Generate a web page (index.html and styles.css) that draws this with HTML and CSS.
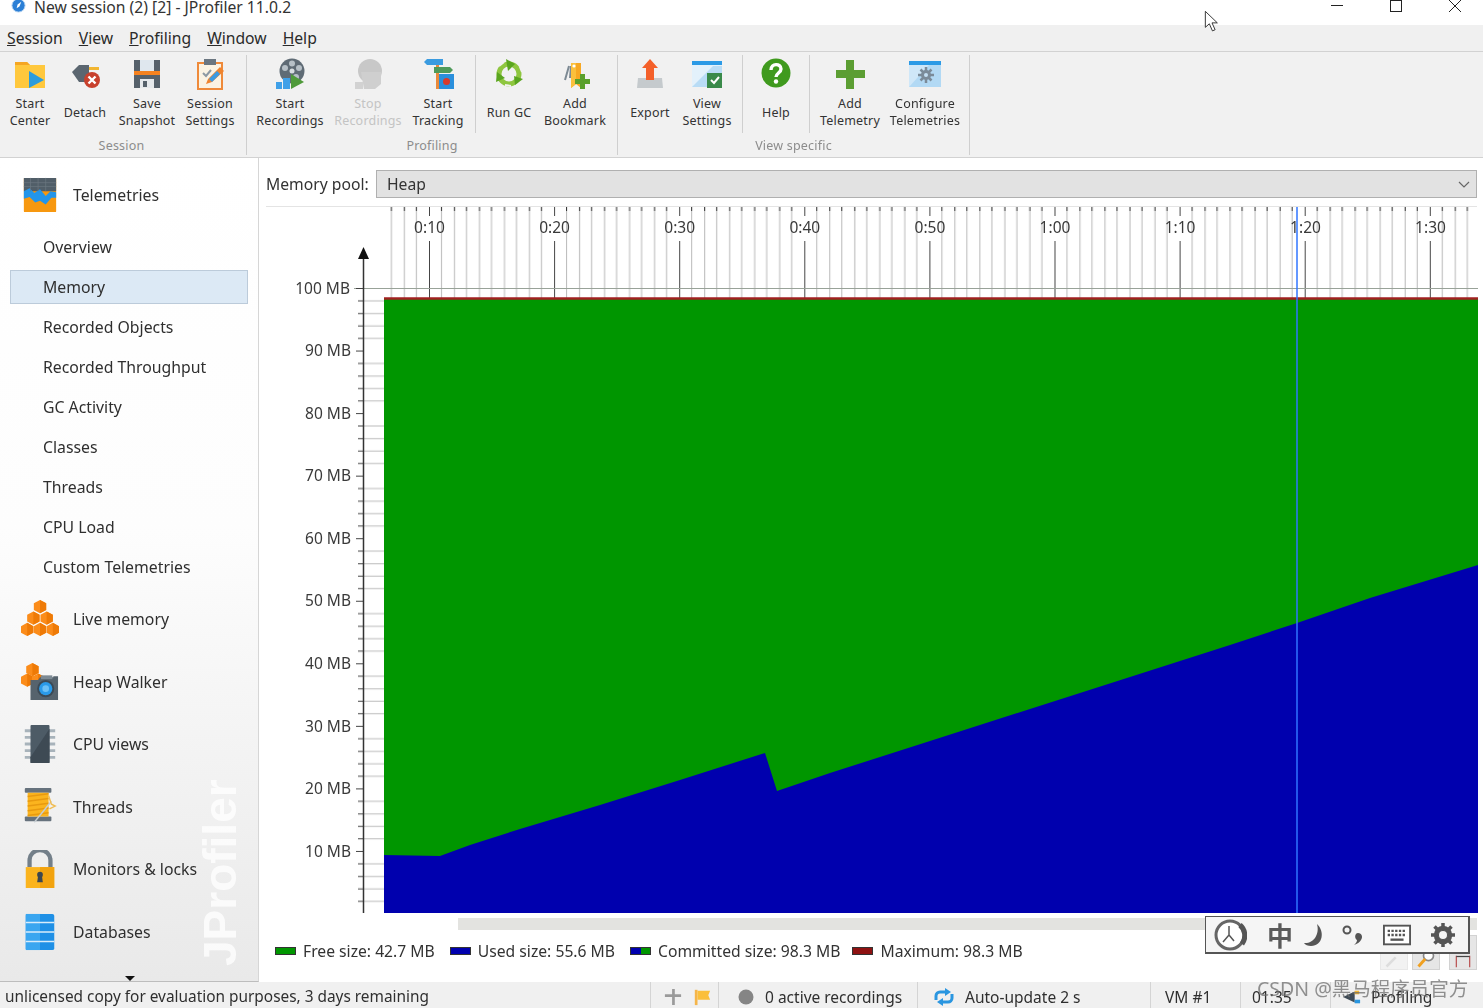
FILE: index.html
```html
<!DOCTYPE html>
<html lang="en">
<head>
<meta charset="utf-8">
<title>JProfiler</title>
<link rel="stylesheet" href="styles.css">
</head>
<body>
<div class="app">
  <header class="titlebar">
    <svg class="title-icon" viewBox="0 0 16 16"><circle cx="8" cy="8" r="7" fill="#2b7fd6" stroke="#bcd8f2"/><path d="M11 4 9 9 6 11l1-4z" fill="#fff"/></svg>
    <span class="title-text">New session (2) [2] - JProfiler 11.0.2</span>
    <div class="win-buttons">
      <svg class="win-btn" viewBox="0 0 60 14"><path d="M27 5.500h12" stroke="#222" fill="none"/></svg>
      <svg class="win-btn" viewBox="0 0 60 14"><rect x="26.500" y="0.500" width="11" height="11" stroke="#222" fill="none"/></svg>
      <svg class="win-btn" viewBox="0 0 60 14"><path d="M25 0l12 12M37 0 25 12" stroke="#222" fill="none"/></svg>
    </div>
  </header>

  <nav class="menubar">
    <span><u>S</u>ession</span><span><u>V</u>iew</span><span><u>P</u>rofiling</span><span><u>W</u>indow</span><span><u>H</u>elp</span>
  </nav>

  <section class="toolbar">
    <div class="tool-group group-session">
      <div class="tool-row">
        <div class="tool">
          <svg class="tool-icon" viewBox="0 0 32 32"><path d="M1 4h12l3 3h15v23H1z" fill="#ffc83d"/><path d="M1 4h12l3 3H1z" fill="#f5a623"/><path d="M15 13l15 9-15 8z" fill="#2d9cdb"/></svg>
          <div class="tool-label">Start<br>Center</div>
        </div>
        <div class="tool">
          <svg class="tool-icon" viewBox="0 0 32 32"><path d="M3 14 10 7h10v17H10z" fill="#5b6670"/><path d="M20 9h10v3H20z" fill="#f2b632"/><path d="M20 18h4v3h-4z" fill="#5b6670"/><circle cx="23" cy="22" r="8" fill="#c8412d"/><path d="M19.500 18.500l7 7m0-7-7 7" stroke="#fff" stroke-width="2.400"/></svg>
          <div class="tool-label">Detach</div>
        </div>
        <div class="tool">
          <svg class="tool-icon" viewBox="0 0 32 32"><path d="M3 2h26v28H3z" fill="#56616b"/><path d="M9 2h14v11H9z" fill="#dfe7ee"/><path d="M3 13h26v4H3z" fill="#f58220"/><path d="M9 21h14v9H9z" fill="#e6e9ec"/><path d="M12 23h4v6h-4z" fill="#56616b"/></svg>
          <div class="tool-label">Save<br>Snapshot</div>
        </div>
        <div class="tool">
          <svg class="tool-icon" viewBox="0 0 32 32"><rect x="4" y="5" width="24" height="26" fill="#fbf3e3" stroke="#ef8a3a" stroke-width="2"/><path d="M10 1h12v6H10z" fill="#6b7680"/><path d="M9 15l3 3 5-6" stroke="#8d99a3" stroke-width="2" fill="none"/><path d="M12 26l2-5L26 9l4 4-12 11z" fill="#f0842e"/><path d="M15 21l3 3 8-8-3-3z" fill="#3b9ae1"/></svg>
          <div class="tool-label">Session<br>Settings</div>
        </div>
      </div>
      <div class="group-label">Session</div>
    </div>

    <div class="tool-group group-profiling">
      <div class="tool-row">
        <div class="tool">
          <svg class="tool-icon" viewBox="0 0 32 32"><circle cx="18" cy="13" r="12.500" fill="#5f6b75"/><circle cx="18" cy="13" r="2.500" fill="#d8dde1"/><circle cx="18" cy="5.500" r="3" fill="#b7c0c7"/><circle cx="11" cy="10" r="3" fill="#b7c0c7"/><circle cx="25" cy="10" r="3" fill="#b7c0c7"/><circle cx="22" cy="19" r="3" fill="#b7c0c7"/><path d="M17 16l13 8-13 7z" fill="#4f9a3a"/><path d="M2 24h6v7H2zM9 20h7v11H9z" fill="#3fa0e8"/></svg>
          <div class="tool-label">Start<br>Recordings</div>
        </div>
        <div class="tool disabled">
          <svg class="tool-icon" viewBox="0 0 32 32"><circle cx="18" cy="13" r="12" fill="#c8c8c8"/><path d="M9 14h20v12l-6 5H12z" fill="#cfcfcf"/><path d="M3 24h8v7H3z" fill="#d2d2d2"/></svg>
          <div class="tool-label">Stop<br>Recordings</div>
        </div>
        <div class="tool">
          <svg class="tool-icon" viewBox="0 0 32 32"><path d="M14 1h3v15h-3z" fill="#e98a3c"/><path d="M2 4l3-3h16v6H5z" fill="#3a9be0"/><path d="M12 9h16l3 3-3 3H12z" fill="#4f9a5a"/><path d="M14 16h3v15h-3z" fill="#e98a3c"/><rect x="17" y="16" width="15" height="15" fill="#2a8fdc"/><circle cx="24.500" cy="23.500" r="3.500" fill="#d93a2b"/></svg>
          <div class="tool-label">Start<br>Tracking</div>
        </div>
        <div class="tool-sep"></div>
        <div class="tool">
          <svg class="tool-icon" viewBox="0 0 32 32"><circle cx="16" cy="16" r="10" fill="none" stroke="#8ec63f" stroke-width="5"/><path d="M13 1l9 5-7 7z" fill="#5aa51f"/><path d="M30 21l-8 6-1-9z" fill="#5aa51f"/><path d="M3 24l1-10 8 6z" fill="#5aa51f"/><path d="M6 8 11 4M27 9l2 5M12 27l6 1" stroke="#f1f1f1" stroke-width="2"/></svg>
          <div class="tool-label">Run GC</div>
        </div>
        <div class="tool">
          <svg class="tool-icon" viewBox="0 0 32 32"><path d="M10 8 6 22M12 8l-1 12" stroke="#7d8a94" stroke-width="2" fill="none"/><path d="M12 5h10v25l-5-4-5 4z" fill="#f7a823"/><path d="M12 5h5v21l-5 4z" fill="#fbc03c"/><circle cx="15" cy="8" r="1.600" fill="#fff"/><path d="M21 16h5v5h5v5h-5v5h-5v-5h-5v-5h5z" fill="#5aa02c"/></svg>
          <div class="tool-label">Add<br>Bookmark</div>
        </div>
      </div>
      <div class="group-label">Profiling</div>
    </div>

    <div class="tool-group group-view">
      <div class="tool-row">
        <div class="tool">
          <svg class="tool-icon" viewBox="0 0 32 32"><path d="M4 20h24l1 10H3z" fill="#c5cacd"/><path d="M16 1l8 9h-4v12h-8V10H8z" fill="#f4602a"/></svg>
          <div class="tool-label">Export</div>
        </div>
        <div class="tool">
          <svg class="tool-icon" viewBox="0 0 32 32"><rect x="1" y="3" width="30" height="26" fill="#e3f1fb"/><path d="M1 29 22 8h9v21z" fill="#b9dcf5"/><rect x="1" y="3" width="30" height="4" fill="#2b9ae6"/><rect x="16" y="15" width="15" height="15" fill="#3a8a4a"/><path d="M20 22l3 3 5-6" stroke="#fff" stroke-width="2" fill="none"/></svg>
          <div class="tool-label">View<br>Settings</div>
        </div>
        <div class="tool-sep"></div>
        <div class="tool">
          <svg class="tool-icon" viewBox="0 0 32 32"><circle cx="16" cy="15" r="14.500" fill="#3f9a1e"/><path d="M11 12c0-7 10-7 10-1 0 4-5 4-5 8" stroke="#fff" stroke-width="3.400" fill="none"/><circle cx="16" cy="23.500" r="2.200" fill="#fff"/></svg>
          <div class="tool-label">Help</div>
        </div>
        <div class="tool-sep"></div>
        <div class="tool">
          <svg class="tool-icon" viewBox="0 0 32 32"><path d="M12 2h8v10h11v8H20v11h-8V20H2v-8h10z" fill="#5c9e33"/></svg>
          <div class="tool-label">Add<br>Telemetry</div>
        </div>
        <div class="tool">
          <svg class="tool-icon" viewBox="0 0 32 32"><rect x="0" y="3" width="32" height="26" fill="#cfe7f8"/><path d="M0 29 20 7h12v22z" fill="#b2d9f4"/><rect x="0" y="3" width="32" height="4" fill="#2b9ae6"/><path d="M17 9v16M9 17h16M11.500 11.500l11 11M22.500 11.500l-11 11" stroke="#7b8b99" stroke-width="2.500"/><circle cx="17" cy="17" r="5" fill="#7b8b99"/><circle cx="17" cy="17" r="2" fill="#c3def2"/></svg>
          <div class="tool-label">Configure<br>Telemetries</div>
        </div>
      </div>
      <div class="group-label">View specific</div>
    </div>
  </section>

  <main class="workspace">
    <aside class="sidebar">
      <div class="side-head first">
        <svg class="side-icon" viewBox="0 0 40 40"><rect x="3" y="2" width="34" height="36" rx="1" fill="#f7980f"/><path d="M3 2h34v14H3z" fill="#515e68"/><path d="M3 16l6-3 5 5 6-4 6 7 5-5 6 1v6l-5 0-6 7-6-4-5 2-6-6-6 2z" fill="#2395ea"/><path d="M3 7h34M3 11h34M10 2v14M18 2v14M26 2v14" stroke="#6c7882" stroke-width=".7"/></svg>
        <span>Telemetries</span>
      </div>
      <ul class="side-list">
        <li>Overview</li>
        <li class="selected">Memory</li>
        <li>Recorded Objects</li>
        <li>Recorded Throughput</li>
        <li>GC Activity</li>
        <li>Classes</li>
        <li>Threads</li>
        <li>CPU Load</li>
        <li>Custom Telemetries</li>
      </ul>
      <div class="side-head">
        <svg class="side-icon" viewBox="0 0 40 40"><defs><g id="cube"><path d="M0-7 6.500-3.500v7L0 7-6.500 3.500v-7z" fill="#fb8c1a"/><path d="M0-7 6.500-3.500v7L0 7z" fill="#ee7a06"/></g></defs><use href="#cube" x="20" y="7"/><use href="#cube" x="13" y="19"/><use href="#cube" x="27" y="19"/><use href="#cube" x="6.500" y="31"/><use href="#cube" x="20" y="31"/><use href="#cube" x="33.500" y="31"/></svg>
        <span>Live memory</span>
      </div>
      <div class="side-head">
        <svg class="side-icon" viewBox="0 0 40 40"><use href="#cube" x="12" y="7"/><use href="#cube" x="6.500" y="18"/><use href="#cube" x="18" y="18"/><path d="M10 18h8l2-3h14v-1h5v25H10z" fill="#56636d"/><path d="M21 13h12v4H21z" fill="#7d8a94"/><circle cx="26" cy="27" r="9" fill="#3c4a55"/><circle cx="26" cy="27" r="7" fill="#2a9ae8"/><circle cx="26" cy="27" r="3.500" fill="#6cc0f5"/></svg>
        <span>Heap Walker</span>
      </div>
      <div class="side-head">
        <svg class="side-icon" viewBox="0 0 40 40"><path d="M4 6h32M4 13h32M4 20h32M4 27h32M4 34h32" stroke="#a8b3bb" stroke-width="3"/><rect x="10" y="0" width="20" height="40" rx="1" fill="#4d5b66"/><path d="M10 40V34L30 4v36z" fill="#3e4a54"/></svg>
        <span>CPU views</span>
      </div>
      <div class="side-head">
        <svg class="side-icon" viewBox="0 0 40 40"><rect x="4" y="0" width="28" height="5" rx="1" fill="#66727d"/><rect x="4" y="30" width="28" height="5" rx="1" fill="#66727d"/><rect x="7" y="5" width="22" height="25" fill="#fbb41e"/><path d="M7 9l22-3M7 14l22-3M7 19l22-3M7 24l22-3M7 29l22-3" stroke="#e89a10" stroke-width="1.500"/><path d="M14 36 32 14" stroke="#c6cdd2" stroke-width="1.500"/><path d="M29 8l3 9 4 2-6 3" stroke="#f0bd55" stroke-width="1.500" fill="none"/></svg>
        <span>Threads</span>
      </div>
      <div class="side-head">
        <svg class="side-icon" viewBox="0 0 40 40"><path d="M9 18v-7a11 11 0 0 1 22 0v7" stroke="#737f89" stroke-width="4.500" fill="none"/><path d="M5 18h30v22H5z" fill="#fbb41e"/><path d="M20 18h15v22H20z" fill="#f2a30f"/><circle cx="20" cy="26" r="3" fill="#3c4650"/><path d="M18 27h4l1 7h-6z" fill="#3c4650"/></svg>
        <span>Monitors &amp; locks</span>
      </div>
      <div class="side-head">
        <svg class="side-icon" viewBox="0 0 40 40"><rect x="5" y="1" width="30" height="38" rx="2" fill="#1f90e6"/><path d="M5 1h15v38H5z" fill="#3aa6f0"/><path d="M5 10h30M5 20h30M5 30h30" stroke="#d8ecfa" stroke-width="1.500"/></svg>
        <span>Databases</span>
      </div>
      <div class="side-watermark">JProfiler</div>
      <div class="side-more"></div>
    </aside>

    <section class="content">
      <div class="pool-row">
        <label class="pool-label">Memory pool:</label>
        <div class="combo">
          <span>Heap</span>
          <svg class="combo-arrow" viewBox="0 0 12 7"><path d="M1 1l5 5 5-5" stroke="#666" stroke-width="1.200" fill="none"/></svg>
        </div>
      </div>

      <svg class="chart" viewBox="259 207 1224 711">
        <defs>
          <pattern id="timeGrid" patternUnits="userSpaceOnUse" x="429" y="207" width="125.100" height="91">
            <path d="M12.500 4v87M25.500 4v87M37.500 4v87M50.500 4v87M62.500 4v87M75.500 4v87M87.500 4v87M100.500 4v87M112.500 4v87" stroke="#b8b8b8" fill="none"/>
            <path d="M12.500 0v4M25.500 0v4M37.500 0v4M50.500 0v4M62.500 0v4M75.500 0v4M87.500 0v4M100.500 0v4M112.500 0v4" stroke="#222" fill="none"/>
            <path d="M.5 0v9M.5 34v57" stroke="#444" fill="none"/>
          </pattern>
          <pattern id="valueGrid" patternUnits="userSpaceOnUse" x="355" y="288" width="30" height="62.550">
            <path d="M1 .5h8M3 13h6M3 25.500h6M3 38h6M3 50.500h6" stroke="#444" fill="none"/>
            <path d="M9 13h21M9 25.500h21M9 38h21M9 50.500h21" stroke="#bbb" fill="none"/>
          </pattern>
        </defs>
        <rect x="388" y="207" width="1087" height="91" fill="url(#timeGrid)"/>
        <path d="M354 288.500h1124" stroke="#98a298" fill="none"/>
        <rect x="355" y="288" width="29" height="625" fill="url(#valueGrid)"/>
        <path d="M363.500 258v655" stroke="#333" stroke-width="1.500" fill="none"/>
        <path d="M358 259l5.500-12 5.500 12z" fill="#111"/>
        <rect x="384" y="299" width="1094" height="614" fill="#009600"/>
        <path d="M384 855 440 856 470 845 520 829 600 805 680 780 765 753 777 791 830 773 930 741 1030 709 1130 677 1230 645 1297 623 1370 598 1478 565V913H384z" fill="#0000ae"/>
        <path d="M384 298.500h1094" stroke="#a02020" stroke-width="2.500" fill="none"/>
        <path d="M1297 207v706" stroke="#2f74ff" stroke-width="1.500" fill="none"/>
        <g class="chart-text" text-anchor="middle">
          <text x="429.500" y="233">0:10</text><text x="554.600" y="233">0:20</text><text x="679.700" y="233">0:30</text><text x="804.800" y="233">0:40</text><text x="929.900" y="233">0:50</text><text x="1055" y="233">1:00</text><text x="1180.100" y="233">1:10</text><text x="1305.500" y="233">1:20</text><text x="1430.500" y="233">1:30</text>
        </g>
        <g class="chart-text" text-anchor="end">
          <text x="350" y="294">100 MB</text><text x="351" y="356">90 MB</text><text x="351" y="419">80 MB</text><text x="351" y="481">70 MB</text><text x="351" y="544">60 MB</text><text x="351" y="606">50 MB</text><text x="351" y="669">40 MB</text><text x="351" y="732">30 MB</text><text x="351" y="794">20 MB</text><text x="351" y="857">10 MB</text>
        </g>
      </svg>

      <div class="hscroll"></div>

      <div class="legend">
        <span class="legend-item"><i class="swatch free"></i>Free size: 42.7 MB</span>
        <span class="legend-item"><i class="swatch used"></i>Used size: 55.6 MB</span>
        <span class="legend-item"><i class="swatch committed"></i>Committed size: 98.3 MB</span>
        <span class="legend-item"><i class="swatch maximum"></i>Maximum: 98.3 MB</span>
        <div class="zoom-tools">
          <div class="zoom-btn faded"><svg viewBox="0 0 24 24"><path d="M3 21 14 10" stroke="#ddd" stroke-width="3"/></svg></div>
          <div class="zoom-btn"><svg viewBox="0 0 24 24"><circle cx="15" cy="8" r="6" fill="#fff" stroke="#888" stroke-width="2"/><path d="M3 21 11 12" stroke="#f0a020" stroke-width="3.500"/></svg></div>
          <div class="zoom-btn"><svg viewBox="0 0 24 24"><path d="M4 22V8M20 22V8" stroke="#b55" stroke-width="1.500"/><path d="M4 9h16" stroke="#444" stroke-width="1.500"/></svg></div>
        </div>
      </div>
    </section>
  </main>

  <footer class="statusbar">
    <div class="status-cell license">unlicensed copy for evaluation purposes, 3 days remaining</div>
    <div class="status-cell centered">
      <svg class="status-icon" viewBox="0 0 20 20"><path d="M9 1h3v18H9zM1 7h18v3H1z" fill="#9a9a9a"/></svg>
      <svg class="status-icon" viewBox="0 0 20 20"><path d="M2 2h3v17H2z" fill="#f5b54a"/><path d="M5 3h14l-2 5 2 5H5z" fill="#fbbf3b"/></svg>
    </div>
    <div class="status-cell">
      <svg class="status-dot" viewBox="0 0 16 16"><circle cx="8" cy="8" r="7.500" fill="#858585"/></svg>
      <span>0 active recordings</span>
    </div>
    <div class="status-cell">
      <svg class="status-sync" viewBox="0 0 22 18"><path d="M3 12V8a4 4 0 0 1 4-4h7M19 6v4a4 4 0 0 1-4 4H8" stroke="#2a96e0" stroke-width="3" fill="none"/><path d="M12 0l6 4-6 4zM10 10l-6 4 6 4z" fill="#2a96e0"/></svg>
      <span>Auto-update 2 s</span>
    </div>
    <div class="status-cell indent">VM #1</div>
    <div class="status-cell clock">01:35</div>
    <div class="status-cell profiling">
      <svg class="status-icon" viewBox="0 0 22 20"><path d="M1 10 14 4v12z" fill="#3f4c57"/><path d="M14 3h5v4h-5z" fill="#f2b632"/><path d="M14 13h6v4h-6z" fill="#2a96e0"/></svg>
      <span>Profiling</span>
    </div>
  </footer>

  <div class="ime-bar">
    <svg class="ime-logo" viewBox="0 0 34 34"><circle cx="17" cy="17" r="14" fill="#fff" stroke="#666" stroke-width="3"/><path d="M27 7a14 14 0 0 1 2 19" stroke="#555" stroke-width="5" fill="none"/><path d="M16 8v9l-6 7M16 17l5 6" stroke="#555" stroke-width="1.500" fill="none"/></svg>
    <span class="ime-char">中</span>
    <svg class="ime-glyph moon" viewBox="0 0 24 24"><path d="M14 1c8 7 6 22-6 22-3 0-6-1-7-3 9 1 16-8 13-19z" fill="#555"/></svg>
    <svg class="ime-glyph dots" viewBox="0 0 24 24"><circle cx="6" cy="7" r="3.500" fill="none" stroke="#555" stroke-width="2"/><path d="M17 10c4 0 5 4 3 7-1 2-4 4-7 5 2-2 3-3 3-5-3-2-2-7 1-7z" fill="#555"/></svg>
    <svg class="ime-glyph keys" viewBox="0 0 30 22"><rect x="1" y="1" width="28" height="20" fill="#fff" stroke="#555" stroke-width="2"/><path d="M5 6.500h20M5 11h20" stroke="#555" stroke-width="2.500" stroke-dasharray="2.500 1.500"/><path d="M8 16h14" stroke="#555" stroke-width="2.500"/></svg>
    <svg class="ime-glyph gear" viewBox="0 0 24 24"><circle cx="12" cy="12" r="7" fill="none" stroke="#555" stroke-width="4.500"/><path d="M12 0v24M0 12h24M3.500 3.500l17 17M20.500 3.500l-17 17" stroke="#555" stroke-width="3.500"/><circle cx="12" cy="12" r="4" fill="#f4f4f4"/></svg>
  </div>

  <div class="watermark">CSDN @黑马程序员官方</div>

  <svg class="cursor" viewBox="0 0 18 26"><path d="M1.500 1v18l4.500-4 3.500 8 3-1.300-3.500-7.700h6z" fill="#fff" stroke="#222"/></svg>
</div>
</body>
</html>
```

FILE: styles.css
```css
* { box-sizing: border-box; }
html, body { margin: 0; padding: 0; }
body {
  width: 1483px;
  height: 1008px;
  overflow: hidden;
  background: #fff;
  color: #2c2c2c;
  font-family: "Noto Sans", "Noto Sans CJK SC", sans-serif;
}
.app {
  position: relative;
  width: 1483px;
  height: 1008px;
  display: flex;
  flex-direction: column;
  overflow: hidden;
  filter: blur(.4px);
}

/* Title bar */
.titlebar {
  flex: 0 0 25px;
  display: flex;
  align-items: flex-start;
  padding-left: 11px;
  background: #fff;
  overflow: hidden;
}
.title-icon { width: 15px; height: 15px; margin-top: -2px; flex: none; }
.title-text { margin-left: 8px; margin-top: -3px; font-size: 15.700px; line-height: 20px; color: #333; }
.win-buttons { margin-left: auto; margin-right: -1px; display: flex; }
.win-btn { width: 60px; height: 14px; display: block; }

/* Menu */
.menubar {
  flex: 0 0 27px;
  display: flex;
  gap: 16px;
  align-items: center;
  padding-left: 7px;
  background: #f0f0f0;
  border-bottom: 1px solid #d2d2d2;
  font-size: 15.700px;
  color: #2a2a2a;
}

/* Toolbar */
.toolbar {
  flex: 0 0 106px;
  display: flex;
  padding-top: 3px;
  background: #f1f1f1;
  border-bottom: 1px solid #d2d2d2;
}
.tool-group {
  height: 100px;
  border-right: 1px solid #cfcfcf;
  display: flex;
  flex-direction: column;
}
.group-session { width: 247px; }
.group-profiling { width: 371px; padding-left: 7px; }
.group-view { width: 352px; padding-left: 4px; }
.tool-row { display: grid; height: 78px; }
.group-session .tool-row { grid-template-columns: 60px 50px 74px 52px; }
.group-profiling .tool-row { grid-template-columns: 72px 84px 56px 10px 66px 66px; }
.group-view .tool-row { grid-template-columns: 56px 58px 7px 66px 1px 80px 70px; }
.tool { display: flex; flex-direction: column; align-items: center; padding-top: 3px; }
.tool-icon { width: 32px; height: 32px; flex: none; }
.tool-label {
  margin-top: 5px;
  height: 34px;
  display: flex;
  align-items: center;
  justify-content: center;
  text-align: center;
  font-size: 12.500px;
  line-height: 17px;
  white-space: nowrap;
  color: #333;
  letter-spacing: .2px;
}
.disabled .tool-label { color: #c4c4c4; }
.tool-sep { height: 78px; justify-self: end; border-right: 1px solid #cfcfcf; }
.group-label {
  text-align: center;
  font-size: 12.500px;
  line-height: 16px;
  padding-top: 5px;
  color: #8c8c8c;
  letter-spacing: .2px;
}
.group-session .group-label { margin-right: 3px; }
.group-profiling .group-label { margin-left: -7px; }
.group-view .group-label { margin-left: -4px; }

/* Workspace */
.workspace { flex: 1 1 auto; display: flex; min-height: 0; }
.sidebar {
  position: relative;
  flex: 0 0 259px;
  background: linear-gradient(180deg, #fff 0%, #fdfdfd 45%, #e9e9e9 100%);
  border-right: 1px solid #d6d6d6;
  border-bottom: 1px solid #bdbdbd;
  font-size: 15.800px;
  color: #2f2f2f;
  overflow: hidden;
}
.side-head { height: 62.500px; display: flex; align-items: center; padding-left: 20px; }
.side-head.first { height: 62px; margin-top: 6px; }
.side-icon { width: 40px; height: 38px; flex: none; margin-right: 13px; }
.side-list {
  list-style: none;
  margin: 1px 0;
  padding: 3px 10px;
  display: flex;
  flex-direction: column;
  gap: 6px;
}
.side-list li {
  height: 34px;
  width: 238px;
  padding-left: 32px;
  display: flex;
  align-items: center;
  border: 1px solid transparent;
}
.side-list li.selected { background: #dce9f5; border-color: #bccbda; }
.side-watermark {
  position: absolute;
  left: 125px;
  top: 690px;
  width: 190px;
  font-family: "Liberation Sans", sans-serif;
  font-weight: 700;
  font-size: 46px;
  line-height: 46px;
  color: #fff;
  opacity: .8;
  transform: rotate(-90deg);
  text-align: left;
  white-space: nowrap;
}
.side-more {
  position: absolute;
  left: 125px;
  bottom: 0;
  border-left: 5px solid transparent;
  border-right: 5px solid transparent;
  border-top: 5px solid #111;
}

/* Content */
.content { flex: 1 1 auto; display: flex; flex-direction: column; min-width: 0; }
.pool-row {
  flex: 0 0 49px;
  margin: 0 6px 0 7px;
  padding-top: 12px;
  display: flex;
  align-items: flex-start;
  border-bottom: 1px solid #e4e4e4;
}
.pool-label { flex: 0 0 110px; line-height: 28px; font-size: 15.700px; color: #333; }
.combo {
  flex: 1 1 auto;
  height: 28px;
  display: flex;
  align-items: center;
  justify-content: space-between;
  padding: 0 6px 0 10px;
  background: #e2e2e2;
  border: 1px solid #b0b0b0;
  font-size: 15.700px;
  color: #333;
}
.combo-arrow { width: 12px; height: 7px; }
.chart { display: block; flex: 0 0 711px; width: 1224px; height: 711px; }
.chart-text { font-family: "Noto Sans", sans-serif; font-size: 15.500px; fill: #3a3a3a; }
.hscroll { flex: 0 0 12px; margin: 0 6px 0 199px; background: #e3e3e0; }
.legend {
  flex: 1 1 auto;
  display: flex;
  align-items: flex-start;
  padding-left: 16px;
  font-size: 15.700px;
  color: #333;
}
.legend-item { display: flex; align-items: center; height: 42px; margin-right: 15px; white-space: nowrap; }
.legend-item:nth-child(3) { margin-right: 12px; }
.swatch { width: 21px; height: 8px; margin-right: 7px; border: 1px solid #333; flex: none; }
.swatch.free { background: #009600; }
.swatch.used { background: #0000ae; }
.swatch.committed { background: linear-gradient(90deg, #0000ae 50%, #009600 50%); }
.swatch.maximum { background: #8e1212; }
.zoom-tools { margin-left: auto; margin-top: 5px; margin-right: 6px; display: flex; gap: 4px; }
.zoom-btn { width: 28px; height: 35px; background: #e6e6e6; border: 1px solid #d2d2d2; display: flex; align-items: flex-end; }
.zoom-btn + .zoom-btn + .zoom-btn { margin-left: 5px; }
.zoom-btn.faded { background: #f2f2f2; border-color: #e8e8e8; }
.zoom-btn svg { width: 26px; height: 20px; }

/* Status bar */
.statusbar {
  flex: 0 0 26px;
  display: grid;
  grid-template-columns: 650px 68px 199px 233px 90px 90px 1fr;
  background: #f0f0f0;
  font-size: 15.500px;
  color: #2f2f2f;
}
.status-cell { display: flex; align-items: center; padding: 3px 0 0 5px; white-space: nowrap; overflow: hidden; }
.status-cell + .status-cell { border-left: 1px solid #d4d4d4; }
.status-cell.license { font-size: 15.400px; }
.status-cell.centered { padding-left: 12px; gap: 9px; }
.status-cell.indent { padding-left: 14px; }
.status-cell.clock { padding-left: 11px; }
.status-cell:nth-child(3) { padding-left: 19px; }
.status-cell:nth-child(4) { padding-left: 15px; }
.status-cell.profiling { padding-left: 11px; gap: 9px; }
.status-icon { width: 20px; height: 18px; flex: none; }
.status-dot { width: 16px; height: 16px; margin-right: 11px; flex: none; }
.status-sync { width: 22px; height: 18px; margin-right: 10px; flex: none; }

/* Overlays */
.ime-bar {
  position: absolute;
  left: 1205px;
  top: 916px;
  width: 265px;
  height: 38px;
  display: flex;
  align-items: center;
  padding-left: 7px;
  background: #f5f5f5;
  border: 2px solid #555;
  border-width: 1px 2px 2px 1px;
  z-index: 3;
}
.ime-logo { width: 34px; height: 34px; flex: none; }
.ime-char { margin-left: 20px; font-family: "Noto Sans CJK SC", sans-serif; font-size: 26px; font-weight: 700; line-height: 30px; color: #5a5a5a; }
.ime-glyph { width: 24px; height: 24px; flex: none; }
.ime-glyph.moon { margin-left: 10px; }
.ime-glyph.dots { margin-left: 14px; }
.ime-glyph.keys { margin-left: 18px; width: 28px; height: 22px; }
.ime-glyph.gear { margin-left: 20px; }
.watermark {
  position: absolute;
  left: 1257px;
  top: 976px;
  font-family: "Noto Sans", "Noto Sans CJK SC", sans-serif;
  font-size: 19.500px;
  line-height: 26px;
  color: rgba(110, 110, 110, .75);
  white-space: nowrap;
  z-index: 4;
}
.cursor { position: absolute; left: 1204px; top: 10px; width: 16px; height: 24px; z-index: 5; }
```
